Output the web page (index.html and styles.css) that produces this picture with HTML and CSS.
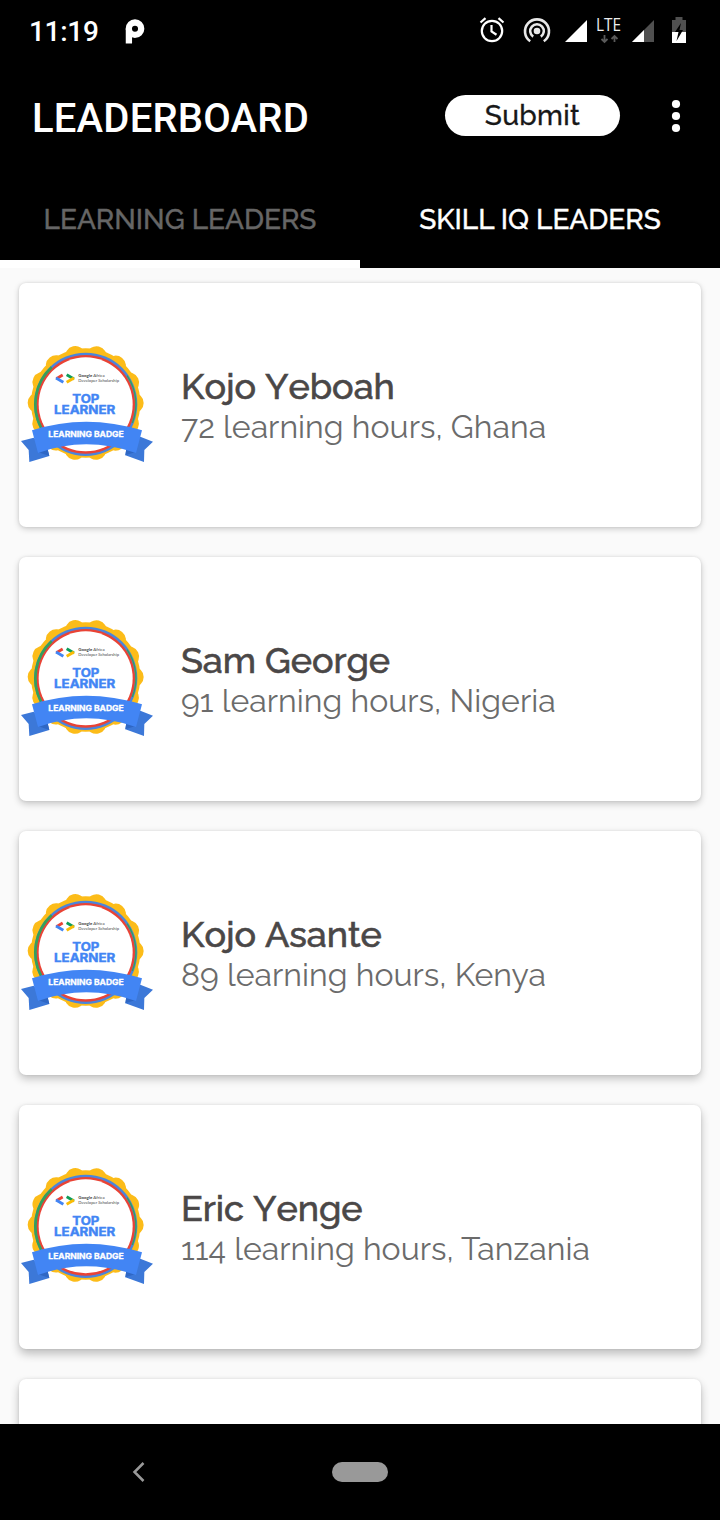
FILE: index.html
```html
<!DOCTYPE html>
<html lang="en">
<head>
<meta charset="utf-8">
<title>Leaderboard</title>
<link rel="stylesheet" href="styles.css">
</head>
<body>
<svg class="defs" aria-hidden="true">
  <symbol id="badge" viewBox="12 0 423 405">
    <circle cx="212" cy="204" r="164" fill="#fcbc19"/>
    <circle cx="212" cy="204" r="143" fill="none" stroke="#fcbc19" stroke-width="62" stroke-linecap="round" pathLength="14" stroke-dasharray="0.001 0.999"/>
    <circle cx="212" cy="208" r="155" fill="#4a85dc"/>
    <circle cx="212" cy="208" r="148" fill="#e94335"/>
    <path d="M110 97A151 151 0 0 0 78 278" fill="none" stroke="#35a05a" stroke-width="8"/>
    <path d="M336 122A151 151 0 0 1 352 264" fill="none" stroke="#35a05a" stroke-width="4"/>
    <circle cx="212" cy="208" r="141" fill="#fff"/>
    <g fill="none" stroke-width="8.500">
      <path d="M124 131l19-11" stroke="#ea4335"/>
      <path d="M123 129l22 13" stroke="#4285f4"/>
      <path d="M155 119l22 13" stroke="#0f9d58"/>
      <path d="M177 129l-22 13" stroke="#fbbc04"/>
    </g>
    <path d="M56 308L18 318L41 345L43 381L103 363L98 344ZM376 305L414 320L388 345L387 381L331 361L334 340Z" fill="#3c78d8"/>
    <path d="M68 351L103 363L98 342ZM362 351L331 361L334 342Z" fill="#2f67c4"/>
    <path d="M51 286Q212 234 381 286L363 354Q212 302 69 354Z" fill="#4285f4"/>
  </symbol>
</svg>
<div class="screen">
  <header class="app-header">
    <div class="status">
      <span class="clock">11:19</span>
      <svg class="p-logo" width="22" height="26" viewBox="0 0 22 26"><g fill="none" stroke="#fff" stroke-width="6.300"><circle cx="11" cy="10.700" r="6.200"/><path d="M4.900 10.700V25.500"/></g></svg>
      <svg class="status-icons" width="220" height="40" viewBox="475 10 220 40">
        <g fill="none" stroke="#fff" stroke-width="2.2">
          <circle cx="492" cy="31" r="10.2"/><path d="M491.5 25v6.5l5 3.2M480.5 22.5l5-4.300M503.500 22.500l-5-4.300"/>
        </g>
        <g fill="none" stroke="#e8e8e8" stroke-width="2.6">
          <path d="M530.2 41.300a12 12 0 1 1 13.600 0M533.200 36.700a6.800 6.800 0 1 1 7.600 0"/>
        </g>
        <circle cx="537" cy="31" r="3.300" fill="#e8e8e8"/>
        <path d="M565 42L587 20V42Z" fill="#fff"/>
        <text class="lte" x="596" y="31" textLength="25" lengthAdjust="spacingAndGlyphs">LTE</text>
        <path d="M604.500 35v6M601.500 39l3 3 3-3M614.500 42v-6M611.500 39l3-3 3 3" fill="none" stroke="#5a5a5a" stroke-width="1.800"/>
        <path d="M632 42L654 20V42Z" fill="#505050"/><path d="M632 42L644 30V42Z" fill="#fff"/>
        <path d="M675.500 17h7v3h3.500v12h-14V20h3.500Z" fill="#505050"/><path d="M672 32h14v11h-14Z" fill="#fff"/>
        <path d="M681 23l-6 9h3.500l-2 9 6.500-11h-3.500Z" fill="#000"/>
      </svg>
    </div>
    <div class="toolbar">
      <h1 class="title">LEADERBOARD</h1>
      <button class="submit">Submit</button>
      <svg class="more" width="12" height="36" viewBox="0 0 12 36" fill="#fff"><circle cx="6" cy="6" r="4.100"/><circle cx="6" cy="18" r="4.100"/><circle cx="6" cy="30" r="4.100"/></svg>
    </div>
    <nav class="tabs">
      <div class="tab tab-underlined"><span>LEARNING LEADERS</span></div>
      <div class="tab"><span>SKILL IQ LEADERS</span></div>
    </nav>
  </header>
  <main class="list">
    <article class="card shade-1">
      <svg class="badge" viewBox="12 0 423 405"><use href="#badge" x="12" y="0" width="423" height="405"/>
        <text class="badge-small" x="190" y="126" textLength="79" lengthAdjust="spacingAndGlyphs"><tspan font-weight="700">Google</tspan> Africa</text>
        <text class="badge-small" x="190" y="140" textLength="122" lengthAdjust="spacingAndGlyphs">Developer Scholarship</text>
        <text class="badge-title" x="172" y="204" textLength="81" lengthAdjust="spacingAndGlyphs">TOP</text>
        <text class="badge-title" x="117" y="237" textLength="184" lengthAdjust="spacingAndGlyphs">LEARNER</text>
        <text class="badge-ribbon" x="100" y="305" textLength="226" lengthAdjust="spacingAndGlyphs">LEARNING BADGE</text>
      </svg>
      <div class="info"><div class="name">Kojo Yeboah</div><div class="detail">72 learning hours, Ghana</div></div>
    </article>
    <article class="card shade-2">
      <svg class="badge" viewBox="12 0 423 405"><use href="#badge" x="12" y="0" width="423" height="405"/>
        <text class="badge-small" x="190" y="126" textLength="79" lengthAdjust="spacingAndGlyphs"><tspan font-weight="700">Google</tspan> Africa</text>
        <text class="badge-small" x="190" y="140" textLength="122" lengthAdjust="spacingAndGlyphs">Developer Scholarship</text>
        <text class="badge-title" x="172" y="204" textLength="81" lengthAdjust="spacingAndGlyphs">TOP</text>
        <text class="badge-title" x="117" y="237" textLength="184" lengthAdjust="spacingAndGlyphs">LEARNER</text>
        <text class="badge-ribbon" x="100" y="305" textLength="226" lengthAdjust="spacingAndGlyphs">LEARNING BADGE</text>
      </svg>
      <div class="info"><div class="name">Sam George</div><div class="detail">91 learning hours, Nigeria</div></div>
    </article>
    <article class="card shade-3">
      <svg class="badge" viewBox="12 0 423 405"><use href="#badge" x="12" y="0" width="423" height="405"/>
        <text class="badge-small" x="190" y="126" textLength="79" lengthAdjust="spacingAndGlyphs"><tspan font-weight="700">Google</tspan> Africa</text>
        <text class="badge-small" x="190" y="140" textLength="122" lengthAdjust="spacingAndGlyphs">Developer Scholarship</text>
        <text class="badge-title" x="172" y="204" textLength="81" lengthAdjust="spacingAndGlyphs">TOP</text>
        <text class="badge-title" x="117" y="237" textLength="184" lengthAdjust="spacingAndGlyphs">LEARNER</text>
        <text class="badge-ribbon" x="100" y="305" textLength="226" lengthAdjust="spacingAndGlyphs">LEARNING BADGE</text>
      </svg>
      <div class="info"><div class="name">Kojo Asante</div><div class="detail">89 learning hours, Kenya</div></div>
    </article>
    <article class="card shade-4">
      <svg class="badge" viewBox="12 0 423 405"><use href="#badge" x="12" y="0" width="423" height="405"/>
        <text class="badge-small" x="190" y="126" textLength="79" lengthAdjust="spacingAndGlyphs"><tspan font-weight="700">Google</tspan> Africa</text>
        <text class="badge-small" x="190" y="140" textLength="122" lengthAdjust="spacingAndGlyphs">Developer Scholarship</text>
        <text class="badge-title" x="172" y="204" textLength="81" lengthAdjust="spacingAndGlyphs">TOP</text>
        <text class="badge-title" x="117" y="237" textLength="184" lengthAdjust="spacingAndGlyphs">LEARNER</text>
        <text class="badge-ribbon" x="100" y="305" textLength="226" lengthAdjust="spacingAndGlyphs">LEARNING BADGE</text>
      </svg>
      <div class="info"><div class="name">Eric Yenge</div><div class="detail">114 learning hours, Tanzania</div></div>
    </article>
    <article class="card shade-4"></article>
  </main>
  <footer class="navbar">
    <svg class="back" width="14" height="22" viewBox="0 0 14 22"><path d="M12.500 2L3.500 11L12.500 20" fill="none" stroke="#999" stroke-width="2.500"/></svg>
    <span class="home"></span>
  </footer>
</div>
</body>
</html>
```
FILE: styles.css
```css
* { box-sizing: border-box; }
body { margin: 0; background: #000; font-family: Raleway, Lato, "Liberation Sans", sans-serif; }
.defs { display: block; width: 0; height: 0; }
.screen { width: 720px; height: 1520px; display: flex; flex-direction: column; overflow: hidden; }
.app-header { height: 268px; background: #000; color: #fff; flex: none; }
.status { height: 62px; display: flex; align-items: center; padding: 0 25px 0 29px; }
.clock { font: 500 28px/32px Roboto, sans-serif; width: 95px; letter-spacing: -0.3px; padding-top: 1px; }
.p-logo { margin-top: -1px; }
.status-icons { margin-left: auto; margin-top: -2px; }
.lte { font: 18px "Open Sans", sans-serif; fill: #eee; }
.toolbar { height: 110px; display: flex; align-items: center; padding: 0 38px 0 32px; }
.title { margin: 3px 0 0; font: 500 40px/48px Roboto, sans-serif; letter-spacing: 0.2px; width: 413px; white-space: nowrap; }
.submit { width: 175px; height: 41px; margin-top: -3px; padding: 0; border: 0; border-radius: 21px; background: #fff; color: #181818; font: 500 28px/38px Raleway, Lato, sans-serif; letter-spacing: 0.3px; -webkit-text-stroke: 0.3px currentColor; }
.more { margin-left: auto; margin-top: -2px; }
.tabs { display: flex; height: 96px; }
.tab { flex: 1; display: flex; justify-content: center; align-items: center; padding-top: 6px; font-size: 28px; font-weight: 500; white-space: nowrap; border-bottom: 8px solid #000; -webkit-text-stroke: 0.4px currentColor; }
.tab-underlined { border-color: #fff; color: #666; }
.list { height: 1156px; background: #fafafa; padding: 15px 19px 0; display: flex; flex-direction: column; gap: 30px; overflow: hidden; flex: none; }
.card { height: 244px; flex: none; background: #fff; border-radius: 7px; display: flex; align-items: center; gap: 21px; }
.shade-1 { box-shadow: 0 2px 6px rgba(0,0,0,.18), 0 0 3px rgba(0,0,0,.1); }
.shade-2 { box-shadow: 0 3px 7px rgba(0,0,0,.2), 0 0 3px rgba(0,0,0,.1); }
.shade-3 { box-shadow: 0 4px 8px rgba(0,0,0,.22), 0 0 3px rgba(0,0,0,.1); }
.shade-4 { box-shadow: 0 5px 10px rgba(0,0,0,.24), 0 0 3px rgba(0,0,0,.1); }
.badge { width: 141px; height: 135px; margin-top: -5px; }
.badge-small { font: 11.500px/1 Lato, sans-serif; fill: #444; }
.badge-title { font: 700 34px/1 Inter, sans-serif; fill: #4285f4; stroke: #4285f4; stroke-width: 1.2px; }
.badge-ribbon { font: 700 22px/1 Inter, sans-serif; fill: #fff; stroke: #fff; stroke-width: 0.8px; }
.info { white-space: nowrap; }
.name { font-size: 36px; line-height: 42px; font-weight: 500; color: #4a4747; font-kerning: none; -webkit-text-stroke: 0.6px currentColor; letter-spacing: -0.05px; }
.detail { font-size: 32px; line-height: 38px; padding-top: 1px; font-weight: 400; color: #6b6b6b; letter-spacing: 0.04px; }
.navbar { height: 96px; background: #000; display: flex; align-items: center; padding-left: 131px; flex: none; }
.home { width: 56px; height: 20px; border-radius: 10px; background: #999; margin-left: 187px; }
```
